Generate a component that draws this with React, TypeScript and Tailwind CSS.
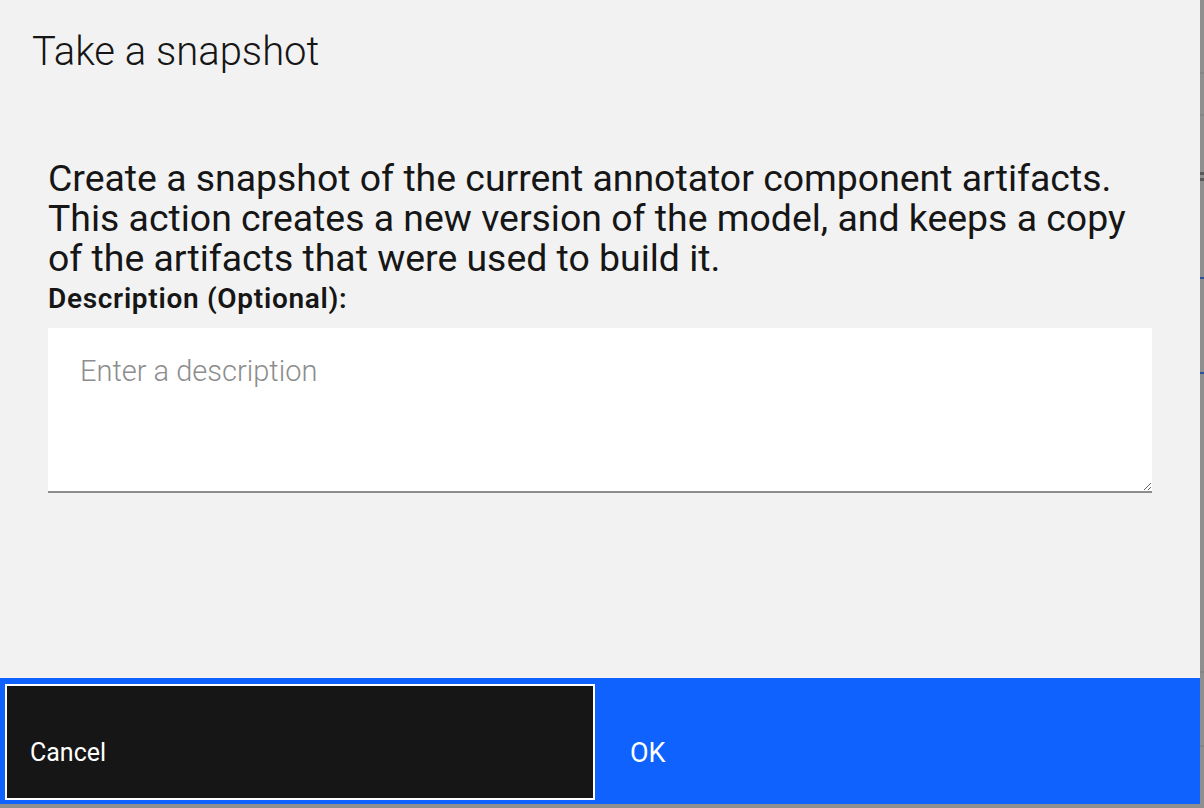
import { useState } from "react";

const sans = "font-['Roboto','Liberation_Sans',sans-serif]";

export default function App() {
  const [desc, setDesc] = useState("");

  return (
    <div className={`flex w-[1204px] h-[808px] bg-[#8f8f8f] ${sans}`}>
      <div className="flex flex-col w-[1200px] h-[804px] bg-[#f2f2f2] text-[#161616]">
        <header className="pt-[28px] pl-[32px]">
          <h1 className="text-[40px] leading-[48px] font-light">Take a snapshot</h1>
        </header>

        <section className="flex-1 pt-[82px] px-[48px]">
          <p className="text-[37.4px] leading-[40px] font-normal">
            Create a snapshot of the current annotator component artifacts.
            <br />
            This action creates a new version of the model, and keeps a copy
            <br />
            of the artifacts that were used to build it.
          </p>
          <label className="block mt-[5px] text-[28px] leading-[32px] font-semibold tracking-[0.7px]">
            Description (Optional):
          </label>
          <textarea
            value={desc}
            onChange={(e) => setDesc(e.target.value)}
            placeholder="Enter a description"
            className="block mt-[13px] w-full h-[165px] bg-white border-b-2 border-[#8d8d8d] pt-[26px] px-[32px] text-[29px] leading-[34px] font-light placeholder:text-[#8d8d8d] outline-none resize-y"
          />
        </section>

        <footer className="flex h-[126px] bg-[#0f62fe] text-white">
          <div className="w-[600px] pt-[6px] pb-[4px] px-[5px]">
            <button className="w-full h-full bg-[#161616] border-2 border-white text-left pl-[23px] pt-[51px] flex items-start text-[25px] leading-[32px]">
              Cancel
            </button>
          </div>
          <button className="flex-1 text-left pl-[30px] pt-[59px] flex items-start text-[27px] leading-[32px]">
            OK
          </button>
        </footer>
      </div>

      {/* bits of the page behind the backdrop */}
      <div className="flex flex-col w-[4px]">
        <div className="h-[72px]" />
        <div className="h-[2px] bg-[#858585]" />
        <div className="h-[40px]" />
        <div className="h-[2px] bg-[#858585]" />
        <div className="h-[56px]" />
        <div className="h-[3px] bg-[#5a5a5a]" />
        <div className="h-[3px]" />
        <div className="h-[3px] bg-[#5a5a5a]" />
        <div className="h-[96px]" />
        <div className="h-[2px] bg-[#2d4f9c]" />
        <div className="h-[93px]" />
        <div className="h-[2px] bg-[#2d4f9c]" />
        <div className="h-[297px]" />
        <div className="h-[2px] bg-[#858585]" />
        <div className="h-[72px]" />
        <div className="h-[2px] bg-[#858585]" />
      </div>
    </div>
  );
}
